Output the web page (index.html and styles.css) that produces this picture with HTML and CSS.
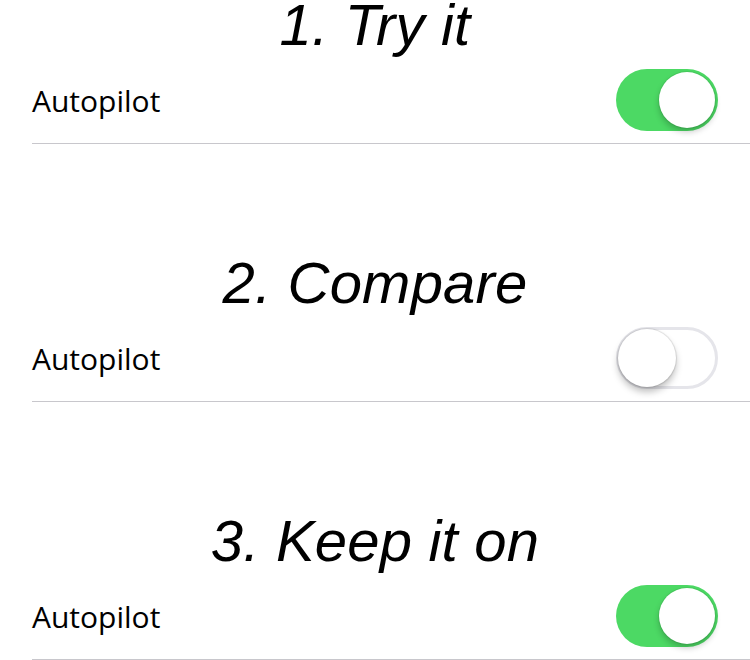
FILE: index.html
```html
<!DOCTYPE html>
<html>
<head>
<meta charset="utf-8">
<link rel="stylesheet" href="styles.css">
</head>
<body>
  <section class="step step-first">
    <h1 class="step-title">1. Try it</h1>
    <div class="row">
      <span class="row-label">Autopilot</span>
      <span class="switch switch-on"><span class="knob"></span></span>
    </div>
  </section>
  <section class="step">
    <h1 class="step-title">2. Compare</h1>
    <div class="row">
      <span class="row-label">Autopilot</span>
      <span class="switch switch-off"><span class="knob"></span></span>
    </div>
  </section>
  <section class="step">
    <h1 class="step-title">3. Keep it on</h1>
    <div class="row">
      <span class="row-label">Autopilot</span>
      <span class="switch switch-on"><span class="knob"></span></span>
    </div>
  </section>
</body>
</html>
```
FILE: styles.css
```css
html, body {
  margin: 0;
  padding: 0;
  background: #ffffff;
}
body {
  width: 750px;
  height: 660px;
  overflow: hidden;
}
.step {
  margin-top: 114px;
}
.step-first {
  margin-top: 0;
}
.step-title {
  margin: 0 0 7px 0;
  height: 50px;
  line-height: 50px;
  text-align: center;
  font-family: "Liberation Sans", Arial, sans-serif;
  font-style: italic;
  font-weight: normal;
  font-size: 58px;
  letter-spacing: 0.2px;
  color: #000;
}
.row {
  margin-left: 32px;
  height: 86px;
  padding-right: 32px;
  border-bottom: 1px solid #c8c7cc;
  display: flex;
  align-items: center;
  justify-content: space-between;
}
.row-label {
  font-family: "Open Sans", sans-serif;
  font-size: 30px;
  color: #000;
  margin-top: 1px;
}
.switch {
  box-sizing: border-box;
  width: 102px;
  height: 62px;
  border-radius: 31px;
  display: flex;
  align-items: center;
}
.switch-on {
  background: #4cd964;
  justify-content: flex-end;
  padding-right: 3px;
}
.switch-off {
  background: #ffffff;
  border: 3px solid #e5e5ea;
  justify-content: flex-start;
  padding-left: 0;
}
.knob {
  width: 56px;
  height: 56px;
  border-radius: 50%;
  background: #ffffff;
  box-shadow: 0 4px 6px rgba(0,0,0,0.22), 0 0 0 1px rgba(0,0,0,0.06);
}
.switch-off .knob {
  width: 58px;
  height: 58px;
  margin-left: -1px;
  box-shadow: 0 5px 7px rgba(0,0,0,0.25), 0 0 1px 1px rgba(0,0,0,0.1);
}
```
